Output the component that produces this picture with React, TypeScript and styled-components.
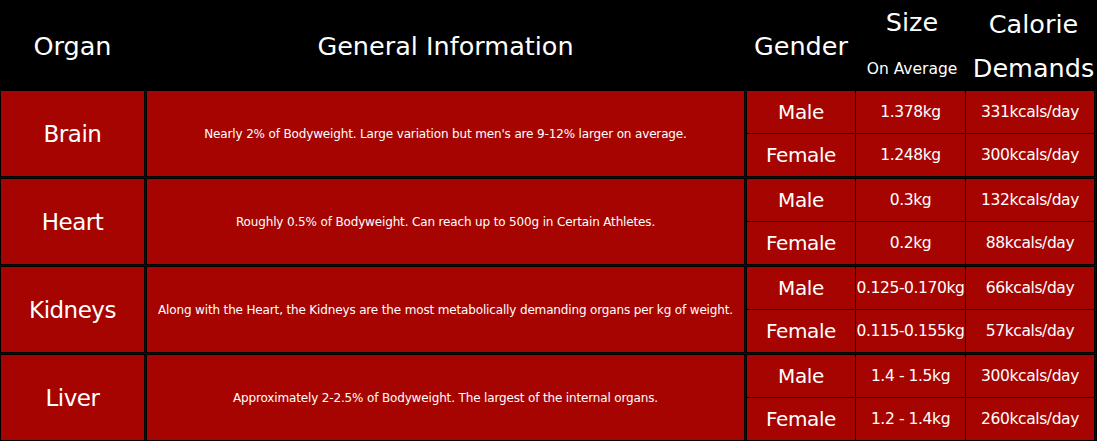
import React from 'react';
import styled, { createGlobalStyle } from 'styled-components';

interface SubRow {
  gender: string;
  size: string;
  calories: string;
}
interface OrganRow {
  organ: string;
  info: string;
  rows: SubRow[];
}

const organs: OrganRow[] = [
  {
    organ: 'Brain',
    info: "Nearly 2% of Bodyweight. Large variation but men's are 9-12% larger on average.",
    rows: [
      { gender: 'Male', size: '1.378kg', calories: '331kcals/day' },
      { gender: 'Female', size: '1.248kg', calories: '300kcals/day' },
    ],
  },
  {
    organ: 'Heart',
    info: 'Roughly 0.5% of Bodyweight. Can reach up to 500g in Certain Athletes.',
    rows: [
      { gender: 'Male', size: '0.3kg', calories: '132kcals/day' },
      { gender: 'Female', size: '0.2kg', calories: '88kcals/day' },
    ],
  },
  {
    organ: 'Kidneys',
    info: 'Along with the Heart, the Kidneys are the most metabolically demanding organs per kg of weight.',
    rows: [
      { gender: 'Male', size: '0.125-0.170kg', calories: '66kcals/day' },
      { gender: 'Female', size: '0.115-0.155kg', calories: '57kcals/day' },
    ],
  },
  {
    organ: 'Liver',
    info: 'Approximately 2-2.5% of Bodyweight. The largest of the internal organs.',
    rows: [
      { gender: 'Male', size: '1.4 - 1.5kg', calories: '300kcals/day' },
      { gender: 'Female', size: '1.2 - 1.4kg', calories: '260kcals/day' },
    ],
  },
];

const GlobalStyle = createGlobalStyle`
  html, body {
    margin: 0;
    padding: 0;
    background: #000;
  }
  body {
    font-family: "DejaVu Sans", "Liberation Sans", sans-serif;
    color: #fff;
  }
`;

const Table = styled.div`
  width: 1097px;
  height: 441px;
  display: flex;
  flex-direction: column;
  background: #000;
  overflow: hidden;
`;

const HeaderRow = styled.div`
  height: 90px;
  display: grid;
  grid-template-columns: 145px 599px 110px 110px 131px;
  column-gap: 1px;
`;

const HeadCell = styled.div`
  display: flex;
  flex-direction: column;
  align-items: center;
  justify-content: center;
  font-size: 25.5px;
  white-space: nowrap;
`;

const HeadLine = styled.div<{ small?: boolean }>`
  height: 44px;
  display: flex;
  align-items: center;
  justify-content: center;
  font-size: ${(props) => (props.small ? '15.5px' : '25.5px')};
  padding-top: ${(props) => (props.small ? '3px' : '0')};
`;

const Body = styled.div`
  display: flex;
  flex-direction: column;
  gap: 1px;
  background: #2a0200;
  width: 1096px;
`;

const Row = styled.div`
  height: 87px;
  display: grid;
  grid-template-columns: 145px 599px 349px;
  column-gap: 1px;
`;

const Cell = styled.div<{ big?: boolean }>`
  box-sizing: border-box;
  border: 1px solid #000;
  background: #a60400;
  display: flex;
  align-items: center;
  justify-content: center;
  text-align: center;
  font-size: ${(props) => (props.big ? '23px' : '12px')};
  letter-spacing: ${(props) => (props.big ? '-0.5px' : '-0.15px')};
  white-space: nowrap;
`;

const Details = styled.div`
  box-sizing: border-box;
  border: 1px solid #000;
  background: #000;
  display: grid;
  grid-template-columns: 108px 109px 128px;
  grid-template-rows: 42px 42px;
  gap: 1px;
`;

const Value = styled.div<{ label?: boolean }>`
  background: #a60400;
  display: flex;
  align-items: center;
  justify-content: center;
  font-size: ${(props) => (props.label ? '20px' : '15.5px')};
  letter-spacing: -0.4px;
  white-space: nowrap;
`;

function App() {
  return (
    <>
      <GlobalStyle />
      <Table>
        <HeaderRow>
          <HeadCell>Organ</HeadCell>
          <HeadCell>General Information</HeadCell>
          <HeadCell>Gender</HeadCell>
          <HeadCell>
            <HeadLine>Size</HeadLine>
            <HeadLine small>On Average</HeadLine>
          </HeadCell>
          <HeadCell>
            <HeadLine>Calorie</HeadLine>
            <HeadLine>Demands</HeadLine>
          </HeadCell>
        </HeaderRow>
        <Body>
          {organs.map((o) => (
            <Row key={o.organ}>
              <Cell big>{o.organ}</Cell>
              <Cell>{o.info}</Cell>
              <Details>
                {o.rows.map((r) => (
                  <React.Fragment key={r.gender}>
                    <Value label>{r.gender}</Value>
                    <Value>{r.size}</Value>
                    <Value>{r.calories}</Value>
                  </React.Fragment>
                ))}
              </Details>
            </Row>
          ))}
        </Body>
      </Table>
    </>
  );
}

export default App;
